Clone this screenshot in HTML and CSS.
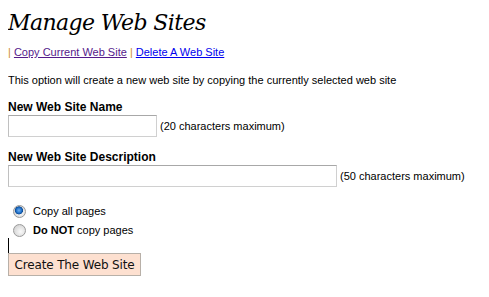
FILE: index.html
```html
<!DOCTYPE html>
<html>
<head>
<meta charset="utf-8">
<link rel="stylesheet" href="styles.css">
</head>
<body>
<h1 class="title">Manage Web Sites</h1>
<div class="nav"><span class="sep">|</span> <a class="visited" href="#">Copy Current Web Site</a> <span class="sep">|</span> <a href="#">Delete A Web Site</a></div>
<p class="intro">This option will create a new web site by copying the currently selected web site</p>
<div class="field">
  <div class="label">New Web Site Name</div>
  <div class="row"><input class="inp short" type="text"><span class="hint">(20 characters maximum)</span></div>
</div>
<div class="field">
  <div class="label">New Web Site Description</div>
  <div class="row"><input class="inp long" type="text"><span class="hint">(50 characters maximum)</span></div>
</div>
<div class="radios">
  <label class="opt"><input class="radio" type="radio" name="copy" checked><span>Copy all pages</span></label>
  <label class="opt"><input class="radio" type="radio" name="copy"><span><b>Do NOT</b> copy pages</span></label>
</div>
<div class="caret"></div>
<button class="btn">Create The Web Site</button>
</body>
</html>
```
FILE: styles.css
```css
body {
  margin: 8px;
  font-family: "Liberation Sans", Arial, sans-serif;
  font-size: 11px;
  color: #000;
  background: #fff;
}
.title {
  font-family: "DejaVu Serif", Georgia, serif;
  font-style: italic;
  font-weight: normal;
  font-size: 22px;
  letter-spacing: -0.6px;
  margin: 1px 0 0 0;
  line-height: 28px;
}
.nav {
  margin-top: 8px;
  line-height: 14px;
}
.sep { color: #d08a30; }
.nav a { color: #0000ee; }
.nav a.visited { color: #551a8b; }
.intro {
  margin: 14px 0 0 0;
  line-height: 14px;
}
.field { margin-top: 13px; }
.label {
  font-weight: bold;
  font-size: 12px;
  line-height: 14px;
}
.row {
  display: flex;
  align-items: center;
  gap: 3px;
  margin-top: 1px;
}
.inp {
  box-sizing: border-box;
  height: 22px;
  border: 1px solid #d0d0d0;
  border-top-color: #a8a8a8;
  border-left-color: #c0c0c0;
  margin: 0;
  padding: 0 2px;
  background: #fff;
}
.short { width: 149px; }
.long { width: 329px; }
.hint { font-size: 11px; }
.radios {
  margin-top: 18px;
  display: flex;
  flex-direction: column;
  gap: 6px;
}
.opt {
  display: flex;
  align-items: center;
  gap: 7px;
  line-height: 13px;
}
.radio {
  -webkit-appearance: none;
  appearance: none;
  margin: 0 0 0 5px;
  width: 13px;
  height: 13px;
  border-radius: 50%;
  border: 1px solid #9a9a9a;
  background: radial-gradient(circle at 60% 60%, #fafafa 0, #e4e4e4 45%, #c8c8c8 100%);
  box-sizing: border-box;
}
.radio:checked {
  background:
    radial-gradient(circle at 45% 40%, #6fb0f0 0, #1f6fc8 30%, #0b4a94 42%, transparent 48%),
    radial-gradient(circle at 60% 60%, #fafafa 0, #e4e4e4 45%, #c8c8c8 100%);
}
.caret {
  width: 1px;
  height: 15px;
  background: #000;
  margin-top: 1px;
}
.btn {
  display: block;
  margin: 0;
  box-sizing: border-box;
  height: 23px;
  width: 133px;
  padding: 0;
  background: #fde0d0;
  border: 1px solid #b8b0a8;
  font-family: "DejaVu Sans", Tahoma, sans-serif;
  font-size: 12px;
  letter-spacing: -0.15px;
  color: #111;
}
```
